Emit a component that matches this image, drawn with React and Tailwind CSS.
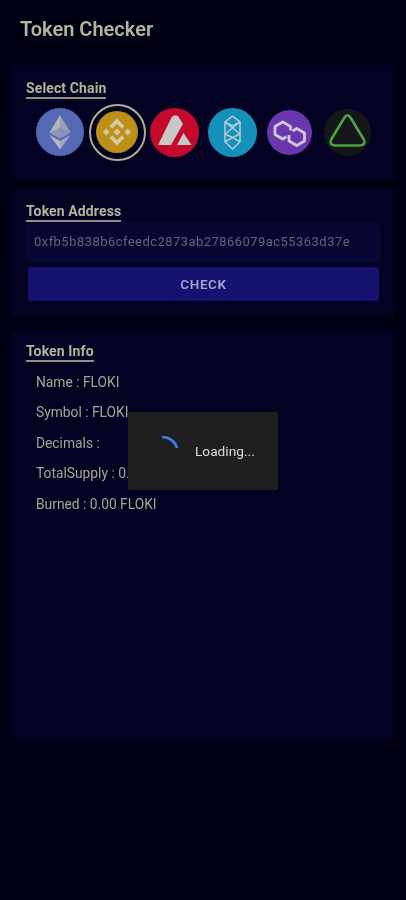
import React from 'react';

const font = { fontFamily: 'Roboto, "Liberation Sans", sans-serif' };

const EthIcon = () => (
  <svg width="48" height="48" viewBox="0 0 48 48">
    <circle cx="24" cy="24" r="24" fill="#5468b4" />
    <path d="M24 7 L13.5 24.5 L24 30.5 Z" fill="#b4b5b3" />
    <path d="M24 7 L34.5 24.5 L24 30.5 Z" fill="#96a0bc" />
    <path d="M24 19.5 L13.5 24.5 L24 30.5 L34.5 24.5 Z" fill="#8490ba" opacity="0.8" />
    <path d="M13.5 27 L24 41.5 V33 Z" fill="#b9bab8" />
    <path d="M34.5 27 L24 41.5 V33 Z" fill="#a0a8bf" />
  </svg>
);

const BnbIcon = () => (
  <svg width="42" height="42" viewBox="0 0 42 42">
    <circle cx="21" cy="21" r="21" fill="#bd9018" />
    <g fill="#d2c8a2">
      <path d="M21 7.5 L28.5 15 L25.8 17.7 L21 12.9 L16.2 17.7 L13.5 15 Z" />
      <path d="M21 34.5 L28.5 27 L25.8 24.3 L21 29.1 L16.2 24.3 L13.5 27 Z" />
      <path d="M21 17.4 L24.6 21 L21 24.6 L17.4 21 Z" />
      <path d="M10.2 17.6 L13.6 21 L10.2 24.4 L6.8 21 Z" />
      <path d="M31.8 17.6 L35.2 21 L31.8 24.4 L28.4 21 Z" />
    </g>
  </svg>
);

const AvaxIcon = () => (
  <svg width="49" height="49" viewBox="0 0 49 49">
    <circle cx="24.5" cy="24.5" r="24.5" fill="#c40a2c" />
    <path d="M21.5 9.5 Q24.5 6 28 8 L33 16 L21 37 H8 Z" fill="#c8c8c6" />
    <path d="M33.5 25 L41.5 37 H27 Z" fill="#c8c8c6" />
  </svg>
);

const FantomIcon = () => (
  <svg width="49" height="49" viewBox="0 0 49 49">
    <circle cx="24.5" cy="24.5" r="24.5" fill="#1590b8" />
    <g fill="none" stroke="#b4ccd4" strokeWidth="1.5" strokeLinejoin="round">
      <path d="M17 13.8 L24.5 8.2 L32 13.8 V33.8 L24.5 41 L17 33.8 Z" />
      <path d="M17 13.8 L24.5 18 L32 13.8" />
      <path d="M17 14 L32 26 M32 14 L17 26" />
      <path d="M17 26 L24.5 29.5 L32 26" />
      <path d="M17 33.8 L24.5 29.5 L32 33.8" />
    </g>
  </svg>
);

const PolygonIcon = () => (
  <svg width="45" height="45" viewBox="0 0 45 45">
    <circle cx="22.5" cy="22.5" r="22.5" fill="#6a36ad" />
    <g fill="none" stroke="#cfc6dc" strokeWidth="2.8" strokeLinejoin="round">
      <path d="M23.5 20.5 V16.5 L15.7 12 L8 16.5 V24.5 L15.7 29 L19.5 26.8" />
      <path d="M22 25 V31 L29.7 35.5 L37.5 31 V23 L29.7 18.5 L25.5 21" />
    </g>
  </svg>
);

const TriangleIcon = () => (
  <svg width="47" height="47" viewBox="0 0 47 47">
    <circle cx="23.5" cy="23.5" r="23.5" fill="#14161a" />
    <path
      d="M20.5 8.5 Q23.5 4 26.5 8.5 L39.5 30 Q42.5 36 36 36.5 H11 Q4.5 36 7.5 30 Z"
      fill="none"
      stroke="#4da344"
      strokeWidth="2.6"
      strokeLinejoin="round"
    />
  </svg>
);

const chains = [
  { name: 'eth', Icon: EthIcon },
  { name: 'bnb', Icon: BnbIcon, selected: true },
  { name: 'avax', Icon: AvaxIcon },
  { name: 'ftm', Icon: FantomIcon },
  { name: 'polygon', Icon: PolygonIcon },
  { name: 'other', Icon: TriangleIcon },
];

const infoRows = [
  'Name : FLOKI',
  'Symbol : FLOKI',
  'Decimals :',
  'TotalSupply : 0.00 FLOKI',
  'Burned : 0.00 FLOKI',
];

const SectionLabel = ({ children }) => (
  <div className="flex">
    <span className="text-[14px] leading-[16px] font-bold tracking-[0.12px] text-[#b3b39e] border-b-2 border-[#8f8f82] pb-[1px]">
      {children}
    </span>
  </div>
);

const App = () => {
  return (
    <div className="relative w-full h-[900px] bg-[#010013] overflow-hidden blur-[0.4px]" style={font}>
      <header className="h-[65px] pl-5 pt-[17px]">
        <h1 className="text-[20px] leading-[24px] font-semibold text-[#b3b39e]">Token Checker</h1>
      </header>

      <main className="mx-[11px] flex flex-col">
        <section className="h-[115px] bg-[#040222] pt-[15px] pl-[15px] rounded-[2px]">
          <SectionLabel>Select Chain</SectionLabel>
          <div className="flex pl-[5px] mt-[4px]">
            {chains.map(({ name, Icon, selected }) => (
              <div key={name} className="w-[57.5px] h-[58px] shrink-0 flex items-center justify-center">
                {selected ? (
                  <div className="w-[57px] h-[57px] shrink-0 rounded-full border-2 border-[#aeae90] flex items-center justify-center">
                    <Icon />
                  </div>
                ) : (
                  <Icon />
                )}
              </div>
            ))}
          </div>
        </section>

        <section className="h-[128px] mt-[9px] bg-[#040222] pt-[14px] px-[15px] rounded-[2px]">
          <SectionLabel>Token Address</SectionLabel>
          <div className="h-[40px] bg-[#080633] rounded-[6px] flex items-center pl-2 text-[13px] text-[#656378] tracking-[0.45px] mr-[-1px]">
            0xfb5b838b6cfeedc2873ab27866079ac55363d37e
          </div>
          <button className="mt-[5px] ml-[2px] w-[351px] h-[34px] bg-[#14126e] rounded-[3px] text-[13.5px] font-semibold tracking-[0.6px] text-[#a5a5c8]">
            CHECK
          </button>
        </section>

        <section className="h-[410px] mt-[13px] bg-[#040222] pt-[13px] px-[15px] rounded-[2px]">
          <SectionLabel>Token Info</SectionLabel>
          <ul className="mt-[12px] pl-[10px] flex flex-col gap-[14.4px]">
            {infoRows.map((row) => (
              <li key={row} className="text-[13.8px] leading-[16px] text-[#a5a594]">
                {row}
              </li>
            ))}
          </ul>
        </section>
      </main>

      <div className="absolute left-[128px] top-[412px] w-[150px] h-[78px] bg-[#1f1f1f] rounded-[2px] flex items-center pl-[32px]">
        <svg width="20" height="20" viewBox="0 0 20 20" className="shrink-0 mb-[12px]">
          <path d="M2 2 C9 2 15 6 17 13" fill="none" stroke="#3f7de0" strokeWidth="2.6" />
        </svg>
        <span className="ml-[15px] text-[13.7px] text-[#dcdcdc]">Loading...</span>
      </div>
    </div>
  );
};

export default App;
